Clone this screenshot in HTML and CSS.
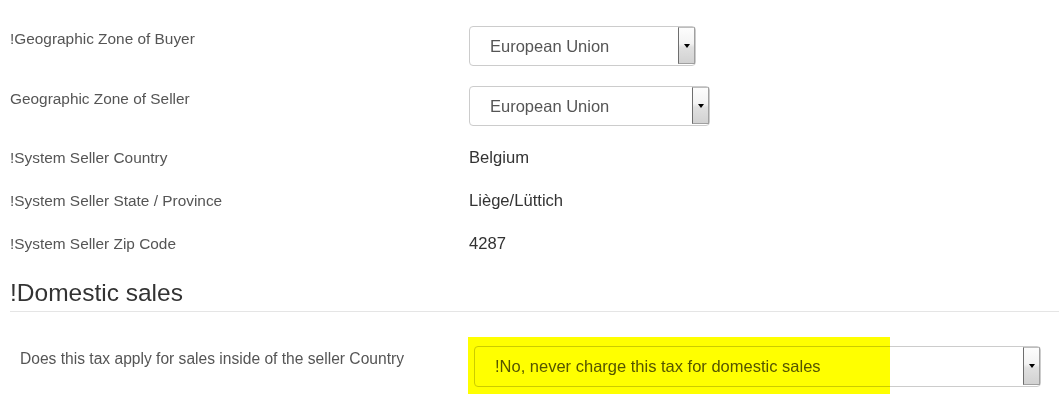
FILE: index.html
```html
<!DOCTYPE html>
<html>
<head>
<meta charset="utf-8">
<link rel="stylesheet" href="styles.css">
</head>
<body>
<div class="page">
  <h3 class="top-heading">!Why this buyer's purchase may apply to this tax</h3>

  <div class="row row-select">
    <div class="label">!Geographic Zone of Buyer</div>
    <div class="value">
      <div class="select w1"><span class="select-text">European Union</span><span class="select-btn"><span class="arrow"></span></span></div>
    </div>
  </div>
  <div class="row row-select">
    <div class="label">Geographic Zone of Seller</div>
    <div class="value">
      <div class="select w2"><span class="select-text">European Union</span><span class="select-btn"><span class="arrow"></span></span></div>
    </div>
  </div>
  <div class="row row-text">
    <div class="label">!System Seller Country</div>
    <div class="value text">Belgium</div>
  </div>
  <div class="row row-text">
    <div class="label">!System Seller State / Province</div>
    <div class="value text">Liège/Lüttich</div>
  </div>
  <div class="row row-text">
    <div class="label">!System Seller Zip Code</div>
    <div class="value text">4287</div>
  </div>

  <h3 class="section-heading">!Domestic sales</h3>

  <div class="row row-domestic">
    <div class="label">Does this tax apply for sales inside of the seller Country</div>
    <div class="value">
      <div class="select w3"><span class="select-text">!No, never charge this tax for domestic sales</span><span class="select-btn"><span class="arrow"></span></span><span class="highlight"></span></div>
    </div>
  </div>
</div>
</body>
</html>
```

FILE: styles.css
```css
html, body {
  margin: 0;
  padding: 0;
  background: #fff;
}
body {
  font-family: "Liberation Sans", Arial, sans-serif;
  color: #333;
  overflow: hidden;
}
.page {
  padding: 0 0 40px 10px;
  background: #fff;
  isolation: isolate;
}
.top-heading {
  font-size: 24px;
  font-weight: normal;
  line-height: 26px;
  margin: -26px 0 26px 0;
  color: #333;
  white-space: nowrap;
}
.row {
  display: flex;
}
.label {
  width: 459px;
  flex: none;
  font-size: 15.4px;
  color: #555;
  line-height: 21px;
  white-space: nowrap;
}
.value {
  flex: none;
}
.row-select {
  height: 40px;
  margin-bottom: 20px;
}
.row-select .label {
  padding-top: 2px;
}
.row-text {
  height: 23px;
  margin-bottom: 20px;
}
.row-text .label {
  padding-top: 1px;
}
.value.text {
  font-size: 16.6px;
  color: #333;
  line-height: 23px;
}
.select {
  position: relative;
  display: flex;
  box-sizing: border-box;
  height: 40px;
  border: 1px solid #ccc;
  border-radius: 4px;
  padding: 0 0 1px 20px;
  background: #fff;
}
.w1 { width: 227px; }
.w2 { width: 241px; }
.w3 { width: 567px; height: 41px; }
.select-text {
  flex: 1;
  font-size: 16.5px;
  color: #555;
  line-height: 38px;
  white-space: nowrap;
}
.select-btn {
  flex: none;
  width: 17px;
  box-sizing: border-box;
  border: 1px solid #a0a0a0;
  border-left-color: #6e6e6e;
  border-top-color: #bdbdbd;
  background: linear-gradient(to bottom, #fdfdfd 0%, #f3f3f3 45%, #e0e0e0 55%, #d2d2d2 100%);
  display: flex;
  align-items: center;
  justify-content: center;
}
.arrow {
  width: 0;
  height: 0;
  border-left: 3.5px solid transparent;
  border-right: 3.5px solid transparent;
  border-top: 4px solid #000;
}
.section-heading {
  font-size: 24.5px;
  font-weight: normal;
  line-height: 26px;
  margin: 0;
  padding: 5px 0 5px 0;
  border-bottom: 1px solid #e5e5e5;
  color: #333;
}
.row-domestic {
  padding-left: 10px;
  margin-top: 34px;
}
.row-domestic .label {
  width: 454px;
  font-size: 15.6px;
  line-height: 21px;
  padding-top: 2px;
}
.highlight {
  position: absolute;
  left: -7px;
  top: -10px;
  width: 422px;
  height: 57px;
  background: #ffff00;
  mix-blend-mode: multiply;
  pointer-events: none;
}
```
